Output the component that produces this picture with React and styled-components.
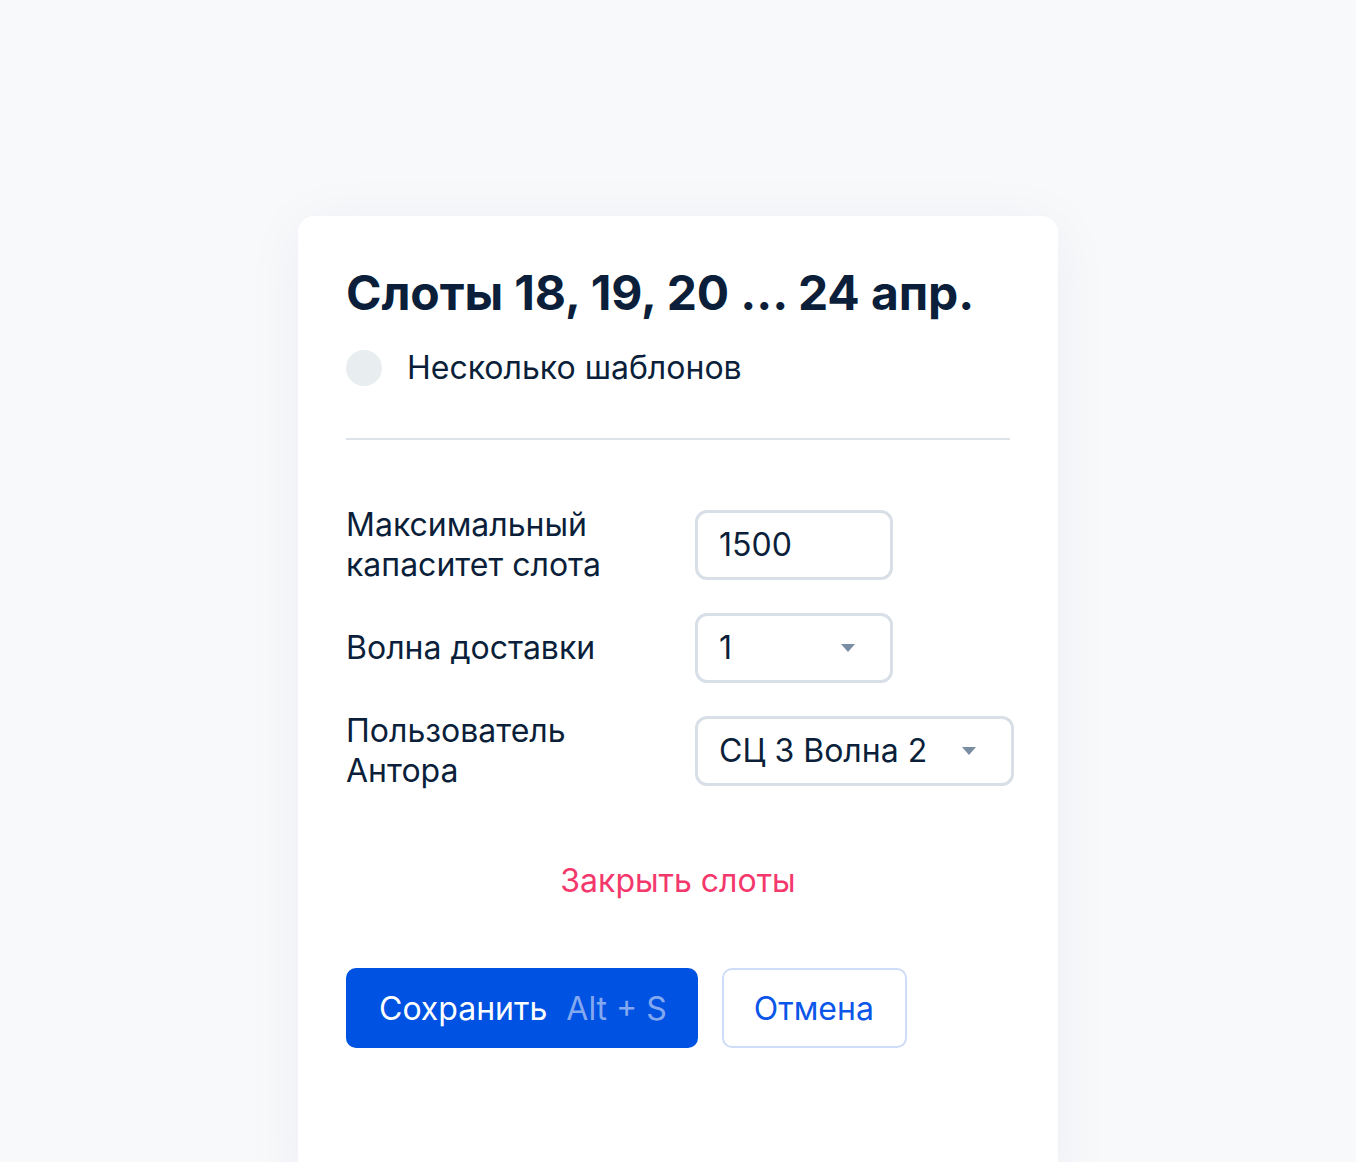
import React from 'react';
import styled, { createGlobalStyle } from 'styled-components';

const GlobalStyle = createGlobalStyle`
  html, body {
    margin: 0;
    padding: 0;
    background: #f8f9fb;
    overflow: hidden;
  }
  body {
    font-family: Inter, "Noto Sans", sans-serif;
    color: #0b1f3a;
  }
`;

const Page = styled.div`
  min-height: 1162px;
  padding-top: 216px;
  box-sizing: border-box;
`;

const Card = styled.div`
  width: 760px;
  min-height: 980px;
  margin: 0 auto;
  box-sizing: border-box;
  padding: 48px 48px 120px;
  background: #fff;
  border-radius: 16px;
  box-shadow: 0 8px 60px rgba(20, 40, 80, 0.05);
`;

const Title = styled.h1`
  margin: 0;
  font-size: 48px;
  line-height: 58px;
  font-weight: 700;
  letter-spacing: -0.1px;
  color: #0b1f3a;
`;

const ToggleRow = styled.label`
  display: flex;
  align-items: center;
  gap: 25px;
  margin-top: 26px;
  font-size: 32px;
  line-height: 40px;
`;

const ToggleDot = styled.span`
  width: 36px;
  height: 36px;
  border-radius: 50%;
  background: #e8edf0;
  flex-shrink: 0;
`;

const Divider = styled.hr`
  margin: 50px 0 0;
  border: none;
  height: 2px;
  background: #dde3e8;
`;

const Form = styled.div`
  display: grid;
  grid-template-columns: 349px max-content;
  align-items: center;
  row-gap: 28px;
  margin-top: 65px;
`;

const Label = styled.div`
  font-size: 32px;
  line-height: 40px;
  color: #0b1f3a;
`;

const Field = styled.div`
  display: inline-flex;
  align-items: center;
  justify-content: space-between;
  gap: 35px;
  box-sizing: border-box;
  width: ${(p) => (p.$width ? `${p.$width}px` : 'auto')};
  justify-self: start;
  height: 70px;
  padding: 0 35px 0 21px;
  border: 3px solid #d8dfe6;
  border-radius: 12px;
  font-size: 32px;
  line-height: 40px;
  white-space: nowrap;
  color: #0b1f3a;
  background: #fff;
`;

const Caret = styled.span`
  width: 0;
  height: 0;
  border-left: 7px solid transparent;
  border-right: 7px solid transparent;
  border-top: 8px solid #7a8ea3;
`;

const DangerLink = styled.div`
  margin-top: 70px;
  text-align: center;
  font-size: 32px;
  line-height: 40px;
  color: #f3386c;
`;

const Actions = styled.div`
  display: flex;
  gap: 24px;
  margin-top: 67px;
`;

const Button = styled.button`
  height: 80px;
  box-sizing: border-box;
  border-radius: 10px;
  font-family: Inter, "Noto Sans", sans-serif;
  font-size: 32px;
  font-weight: 400;
  display: inline-flex;
  align-items: center;
  gap: 19px;
  white-space: nowrap;
  cursor: pointer;
  ${(p) =>
    p.$primary
      ? `
    padding: 0 31px 0 33px;
    background: #0052e2;
    color: #fff;
    border: none;
  `
      : `
    padding: 0 31px 0 30px;
    background: #fff;
    color: #0a56e8;
    border: 2px solid #cfdcf8;
  `}
`;

const Hotkey = styled.span`
  color: #84a8f0;
`;

export default function App() {
  return (
    <>
      <GlobalStyle />
      <Page>
        <Card>
          <Title>Слоты 18, 19, 20 ... 24 апр.</Title>
          <ToggleRow>
            <ToggleDot />
            Несколько шаблонов
          </ToggleRow>
          <Divider />
          <Form>
            <Label>
              Максимальный
              <br />
              капаситет слота
            </Label>
            <Field $width={198}>1500</Field>
            <Label>Волна доставки</Label>
            <Field $width={198}>
              1
              <Caret />
            </Field>
            <Label>
              Пользователь
              <br />
              Антора
            </Label>
            <Field>
              СЦ 3 Волна 2
              <Caret />
            </Field>
          </Form>
          <DangerLink>Закрыть слоты</DangerLink>
          <Actions>
            <Button $primary>
              Сохранить
              <Hotkey>Alt + S</Hotkey>
            </Button>
            <Button>Отмена</Button>
          </Actions>
        </Card>
      </Page>
    </>
  );
}
